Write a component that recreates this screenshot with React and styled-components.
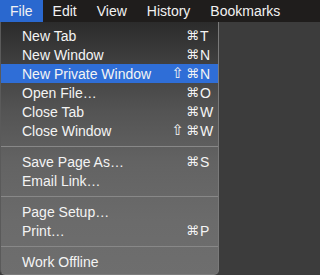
import React from "react";
import styled, { createGlobalStyle } from "styled-components";

const GlobalStyle = createGlobalStyle`
  html, body { margin: 0; padding: 0; }
  body {
    min-height: 275px;
    background: #3c3c3c;
    font-family: "Liberation Sans", "DejaVu Sans", sans-serif;
    -webkit-font-smoothing: antialiased;
  }
`;

const Screen = styled.div`
  display: flex;
  flex-direction: column;
  align-items: flex-start;
`;

const MenuBar = styled.div`
  align-self: stretch;
  height: 22px;
  flex: none;
  display: flex;
  align-items: stretch;
  background: #1f1d1c;
  white-space: nowrap;
`;

const MenuTitle = styled.div`
  padding: 0 10px;
  display: flex;
  align-items: center;
  font-size: 14px;
  color: #f2f2f2;
  background: ${(p) => (p.$active ? "#2a68cf" : "transparent")};
`;

const Dropdown = styled.div`
  flex: none;
  width: 219px;
  box-sizing: border-box;
  padding: 4px 0 3px;
  border-left: 1px solid #5a5a5a;
  border-right: 1px solid #7a7a7a;
  border-bottom: 1px solid #7c7c7c;
  border-radius: 0 0 5px 5px;
  background: linear-gradient(
    to bottom,
    #2b2b2b 0px,
    #3f3f3f 40px,
    #545454 90px,
    #636363 140px,
    #6b6b6b 200px,
    #6e6e6e 253px
  );
`;

const Item = styled.div`
  height: 19px;
  display: grid;
  grid-template-columns: 1fr auto 18px;
  align-items: center;
  padding-left: 21px;
  font-size: 14px;
  color: #f4f4f4;
  background: ${(p) => (p.$highlighted ? "#2f6ed7" : "transparent")};
  white-space: nowrap;
`;

const Label = styled.span``;

const Modifiers = styled.span`
  display: flex;
  justify-content: flex-end;
  align-items: center;
  gap: 2px;
  padding-right: 1px;
`;

const Glyph = styled.span`
  font-family: "DejaVu Sans", sans-serif;
  font-size: ${(p) => (p.$shift ? "15px" : "13px")};
  line-height: 1;
`;

const Key = styled.span`
  font-family: "Liberation Sans", sans-serif;
  font-size: 14px;
`;

const Separator = styled.div`
  height: 12px;
  display: flex;
  align-items: center;
  &::before {
    content: "";
    flex: 1;
    height: 1px;
    background: #888888;
  }
`;

const titles = ["File", "Edit", "View", "History", "Bookmarks"];

const groups = [
  [
    { label: "New Tab", mod: "⌘", key: "T" },
    { label: "New Window", mod: "⌘", key: "N" },
    { label: "New Private Window", mod: "⇧⌘", key: "N", hl: true },
    { label: "Open File…", mod: "⌘", key: "O" },
    { label: "Close Tab", mod: "⌘", key: "W" },
    { label: "Close Window", mod: "⇧⌘", key: "W" },
  ],
  [
    { label: "Save Page As…", mod: "⌘", key: "S" },
    { label: "Email Link…" },
  ],
  [
    { label: "Page Setup…" },
    { label: "Print…", mod: "⌘", key: "P" },
  ],
  [{ label: "Work Offline" }],
];

export default function App() {
  return (
    <>
      <GlobalStyle />
      <Screen>
        <MenuBar>
          {titles.map((t, i) => (
            <MenuTitle key={t} $active={i === 0}>
              {t}
            </MenuTitle>
          ))}
        </MenuBar>
        <Dropdown>
          {groups.map((g, gi) => (
            <React.Fragment key={gi}>
              {gi > 0 && <Separator />}
              {g.map((it) => (
                <Item key={it.label} $highlighted={it.hl}>
                  <Label>{it.label}</Label>
                  <Modifiers>
                    {(it.mod || "").split("").map((m, mi) => (
                      <Glyph key={mi} $shift={m === "⇧"}>
                        {m}
                      </Glyph>
                    ))}
                  </Modifiers>
                  <Key>{it.key || ""}</Key>
                </Item>
              ))}
            </React.Fragment>
          ))}
        </Dropdown>
      </Screen>
    </>
  );
}
